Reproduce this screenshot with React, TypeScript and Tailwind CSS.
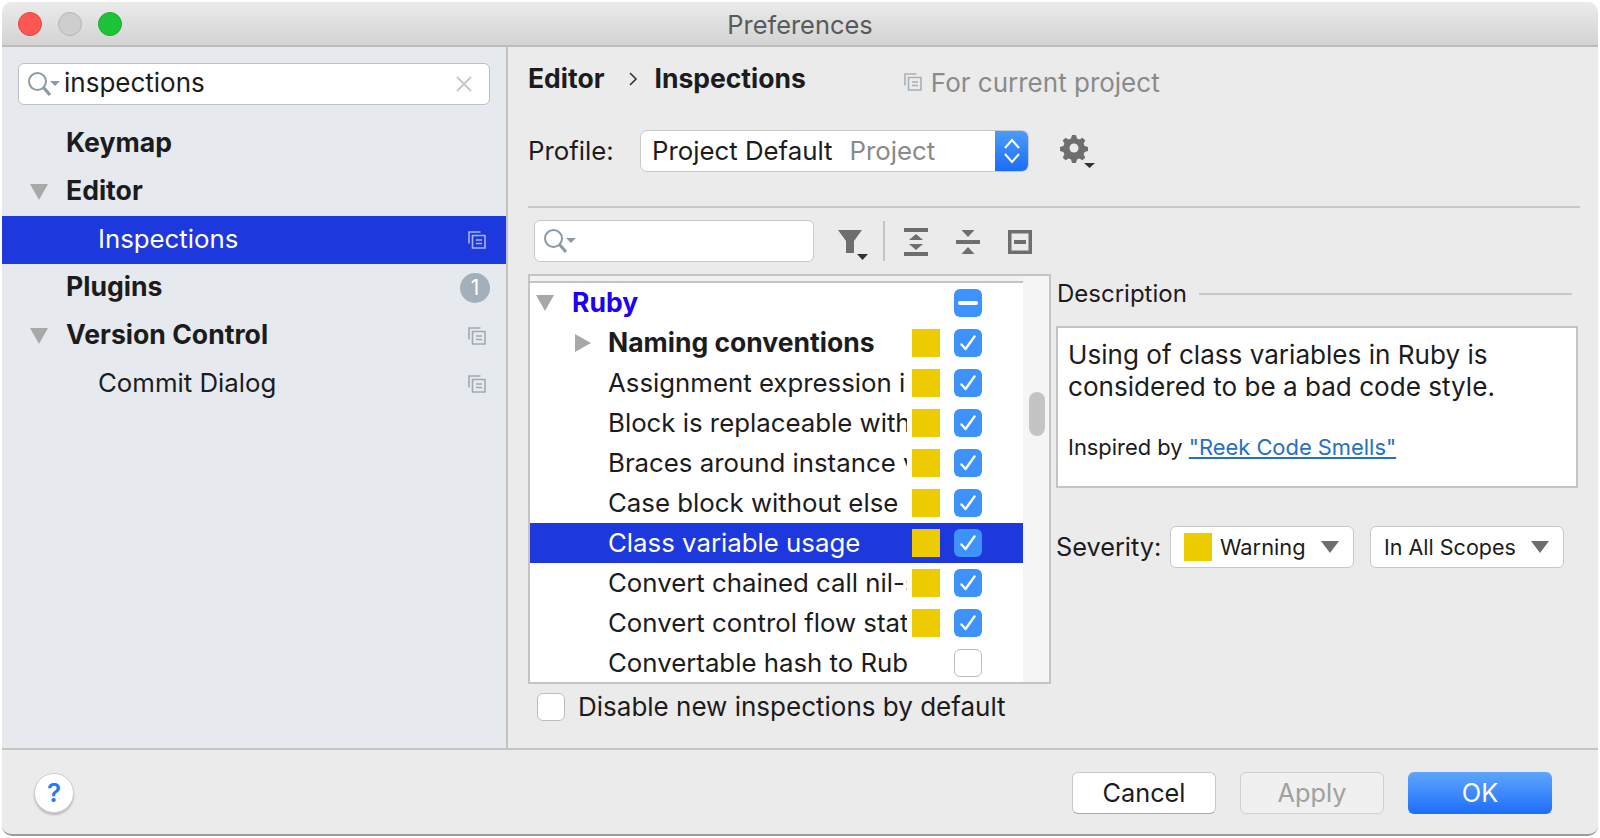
import type { ReactNode } from "react";

function SearchIcon() {
  return (
    <svg width="32" height="24" viewBox="0 0 32 24" fill="none" className="shrink-0">
      <circle cx="9.5" cy="9.5" r="8.5" stroke="#8c9aa5" strokeWidth="2" />
      <path d="M15.500 15.500l6.500 7.500" stroke="#8c9aa5" strokeWidth="3" />
      <path d="M22 9h10l-5 5z" fill="#8c9aa5" />
    </svg>
  );
}

function CopyIcon({ color = "#a0a9b2", size = 18 }: { color?: string; size?: number }) {
  return (
    <svg width={size} height={size} viewBox="0 0 18 18" fill="none" stroke={color} strokeWidth="1.6" className="shrink-0">
      <path d="M1 12.5V1h11.5" />
      <path d="M4.5 4.5H17V17H4.5z" />
      <path d="M8 9h6M8 12.5h6" />
    </svg>
  );
}

function TreeArrow({ open }: { open: boolean }) {
  return open ? (
    <svg width="18" height="16" viewBox="0 0 18 16" className="shrink-0">
      <path d="M0 0h18L9 16z" fill="#a8a8a8" />
    </svg>
  ) : (
    <svg width="16" height="18" viewBox="0 0 16 18" className="shrink-0">
      <path d="M0 0l16 9L0 18z" fill="#a8a8a8" />
    </svg>
  );
}

function Checkbox({ state }: { state: "on" | "off" | "mixed" }) {
  if (state === "off") {
    return <span className="block h-[28px] w-[28px] shrink-0 rounded-[6px] border border-[#bdbdbd] bg-white" />;
  }
  return (
    <span className="flex h-[28px] w-[28px] shrink-0 items-center justify-center rounded-[6px] bg-[#3d92fb]">
      {state === "on" ? (
        <svg width="18" height="18" viewBox="0 0 18 18" fill="none">
          <path d="M2.5 10.5l4 4.5L15.5 2.5" stroke="white" strokeWidth="2.4" strokeLinecap="round" strokeLinejoin="round" />
        </svg>
      ) : (
        <span className="h-[4px] w-[20px] rounded-full bg-white" />
      )}
    </span>
  );
}

function SidebarRow({
  label,
  bold,
  indent,
  arrow,
  selected,
  right,
}: {
  label: string;
  bold?: boolean;
  indent: string;
  arrow?: boolean;
  selected?: boolean;
  right?: ReactNode;
}) {
  return (
    <div className={`flex h-[48px] items-center pr-[20px] ${selected ? "bg-[#1d39dd] text-white" : "text-[#1c1c1c]"}`}>
      <div className={`flex ${indent} shrink-0 items-center pl-[28px]`}>{arrow && <TreeArrow open />}</div>
      <span className={`flex-1 pb-[2px] ${bold ? "text-[26.6px] font-bold" : "text-[25.8px]"}`}>{label}</span>
      {right}
    </div>
  );
}

const inspections: { label: string; bold?: boolean; checked: boolean; severity: boolean; selected?: boolean }[] = [
  { label: "Naming conventions", bold: true, checked: true, severity: true },
  { label: "Assignment expression in conditional", checked: true, severity: true },
  { label: "Block is replaceable with a symbol", checked: true, severity: true },
  { label: "Braces around instance variables", checked: true, severity: true },
  { label: "Case block without else branch", checked: true, severity: true },
  { label: "Class variable usage", checked: true, severity: true, selected: true },
  { label: "Convert chained call nil-safe", checked: true, severity: true },
  { label: "Convert control flow statement", checked: true, severity: true },
  { label: "Convertable hash to Ruby 1.9", checked: false, severity: false },
];

function Dropdown({ className, children }: { className: string; children: ReactNode }) {
  return (
    <div className={`flex h-[42px] items-center rounded-[6px] border border-[#c8c8c8] bg-white ${className}`}>
      {children}
      <svg width="18" height="12" viewBox="0 0 18 12" className="ml-auto shrink-0">
        <path d="M0 0h18L9 12z" fill="#6e6e6e" />
      </svg>
    </div>
  );
}

export default function App() {
  return (
    <div className="h-[838px] w-[1600px] overflow-hidden bg-white [font-family:Inter,sans-serif]">
      <div className="mx-[2px] mt-[2px] flex h-[834px] flex-col overflow-hidden rounded-[10px] border-b-2 border-[#9c9c9c] bg-[#ebebeb]">
        <header className="grid h-[45px] shrink-0 grid-cols-[1fr_auto_1fr] items-center border-b-2 border-[#bcbcbc] bg-gradient-to-b from-[#ebebeb] to-[#d3d3d3]">
          <div className="flex items-center gap-[16px] pl-[16px]">
            <span className="h-[24px] w-[24px] rounded-full border border-[#e2463f] bg-[#fc5753]" />
            <span className="h-[24px] w-[24px] rounded-full border border-[#b5b5b5] bg-[#cecece]" />
            <span className="h-[24px] w-[24px] rounded-full border border-[#1aab29] bg-[#1fc33a]" />
          </div>
          <span className="pt-[4px] text-[25.4px] text-[#5a5a5a]">Preferences</span>
          <div />
        </header>

        <div className="flex min-h-0 flex-1">
          <aside className="w-[506px] shrink-0 border-r-2 border-[#c4c4c4] bg-[#e6eaee]">
            <div className="mx-[16px] mb-[15px] mt-[16px] flex h-[42px] items-center rounded-[6px] border border-[#bcc0c4] bg-white pl-[9px] pr-[15px]">
              <SearchIcon />
              <span className="ml-[4px] flex-1 pb-[3px] text-[26px] text-[#1c1c1c]">inspections</span>
              <svg width="16" height="16" viewBox="0 0 16 16" fill="none" stroke="#c4c8cc" strokeWidth="1.8" className="mr-[2px]">
                <path d="M1 1l14 14M15 1L1 15" />
              </svg>
            </div>
            <SidebarRow label="Keymap" bold indent="w-[64px]" />
            <SidebarRow label="Editor" bold indent="w-[64px]" arrow />
            <SidebarRow label="Inspections" indent="w-[96px]" selected right={<CopyIcon color="#a9b4ee" />} />
            <SidebarRow
              label="Plugins"
              bold
              indent="w-[64px]"
              right={
                <span className="-mr-[4px] flex h-[30px] w-[30px] items-center justify-center rounded-full bg-[#a3afba] text-[21px] text-white">
                  1
                </span>
              }
            />
            <SidebarRow label="Version Control" bold indent="w-[64px]" arrow right={<CopyIcon />} />
            <SidebarRow label="Commit Dialog" indent="w-[96px]" right={<CopyIcon />} />
          </aside>

          <main className="flex min-w-0 flex-1 flex-col pl-[20px] pr-[18px] text-[#1c1c1c]">
            <div className="mt-[14px] flex h-[36px] items-center">
              <span className="text-[26.5px] font-bold">Editor</span>
              <svg width="10" height="14" viewBox="0 0 10 14" fill="none" stroke="#333" strokeWidth="1.6" className="ml-[24px]">
                <path d="M2 1l6 6-6 6" />
              </svg>
              <span className="ml-[16px] text-[26.5px] font-bold">Inspections</span>
              <div className="ml-[98px] mt-[6px] flex items-center gap-[9px] text-[26px] text-[#8a8a8a]">
                <CopyIcon color="#a7b1ba" />
                For current project
              </div>
            </div>

            <div className="mt-[33px] flex h-[42px] items-center">
              <span className="w-[112px] text-[25.8px]">Profile:</span>
              <div className="flex h-[42px] w-[389px] overflow-hidden rounded-[7px] border border-[#c8c8c8] bg-white">
                <div className="flex flex-1 items-center pl-[11px] text-[25.8px]">
                  <span>Project Default</span>
                  <span className="ml-[17px] text-[#8a8a8a]">Project</span>
                </div>
                <div className="flex w-[33px] items-center justify-center bg-gradient-to-b from-[#4b9bfb] to-[#1b6cf7]">
                  <svg width="18" height="26" viewBox="0 0 18 26" fill="none" stroke="white" strokeWidth="2">
                    <path d="M2 10l7-8 7 8M2 16l7 8 7-8" />
                  </svg>
                </div>
              </div>
              <svg width="36" height="36" viewBox="0 0 36 36" className="ml-[31px]">
                <path
                  d="M12 2h4l1 3.4 2.4 1 3.1-1.700 2.800 2.800-1.700 3.100 1 2.400 3.400 1v4l-3.400 1-1 2.400 1.700 3.100-2.800 2.800-3.100-1.700-2.400 1-1 3.400h-4l-1-3.400-2.400-1-3.100 1.700-2.800-2.800 1.700-3.100-1-2.400-3.400-1v-4l3.400-1 1-2.400-1.700-3.100 2.800-2.800 3.100 1.700 2.400-1z"
                  fill="#6e6e6e"
                  fillRule="evenodd"
                />
                <circle cx="14" cy="15" r="4.500" fill="#ebebeb" />
                <path d="M24 30h11l-5.500 5z" fill="#333" />
              </svg>
            </div>

            <div className="mt-[34px] h-[2px] bg-[#c8c8c8]" />

            <div className="ml-[6px] mt-[12px] flex h-[42px] items-center">
              <div className="flex h-[42px] w-[280px] items-center rounded-[6px] border border-[#c8c8c8] bg-white pl-[9px]">
                <SearchIcon />
              </div>
              <svg width="30" height="30" viewBox="0 0 30 30" className="ml-[24px] mt-[8px]">
                <path d="M0 0h24l-8 11v12H8V11z" fill="#6e6e6e" />
                <path d="M19 24h11l-5.500 6z" fill="#333" />
              </svg>
              <div className="ml-[15px] h-[40px] w-[2px] bg-[#c4c4c4]" />
              <svg width="24" height="28" viewBox="0 0 24 28" className="ml-[19px] mt-[2px]">
                <path d="M0 0h24v4H0zM0 24h24v4H0zM12 6l7 6H5zM5 16h14l-7 6z" fill="#6e6e6e" />
              </svg>
              <svg width="24" height="24" viewBox="0 0 24 24" className="ml-[28px] mt-[2px]">
                <path d="M0 10h24v4H0zM5.500 0h13L12 7zM5.500 24h13L12 17z" fill="#6e6e6e" />
              </svg>
              <svg width="24" height="24" viewBox="0 0 24 24" className="ml-[28px] mt-[2px]">
                <path d="M0 0h24v24H0zM3.500 3.500v17h17v-17zM6 10h12v4H6z" fill="#6e6e6e" fillRule="evenodd" />
              </svg>
            </div>

            <div className="mt-[12px] flex min-h-0">
              <div className="w-[523px] shrink-0">
                <div className="flex h-[410px] overflow-hidden border-2 border-[#c4c4c4] bg-[#f5f5f5]">
                  <div className="flex w-[493px] shrink-0 flex-col bg-white">
                    <div className="h-[7px] shrink-0 border-b-2 border-[#c4c4c4] bg-[#f2f2f2]" />
                    <div className="flex h-[40px] shrink-0 items-center pr-[41px]">
                      <div className="flex w-[42px] shrink-0 pl-[6px]">
                        <TreeArrow open />
                      </div>
                      <span className="flex-1 text-[26.5px] font-bold text-[#2000f0]">Ruby</span>
                      <Checkbox state="mixed" />
                    </div>
                    {inspections.map((item, i) => (
                      <div
                        key={item.label}
                        className={`flex h-[40px] shrink-0 items-center pr-[13px] ${item.selected ? "bg-[#1d39dd] text-white" : ""}`}
                      >
                        <div className="flex w-[78px] shrink-0 pl-[45px]">{i === 0 && <TreeArrow open={false} />}</div>
                        <span
                          className={`w-[299px] shrink-0 overflow-hidden whitespace-nowrap ${item.bold ? "text-[26.5px] font-bold" : "text-[25.8px]"}`}
                        >
                          {item.label}
                        </span>
                        <span className={`ml-[5px] h-[28px] w-[28px] shrink-0 ${item.severity ? "bg-[#eccb00]" : ""}`} />
                        <div className="ml-[14px]">
                          <Checkbox state={item.checked ? "on" : "off"} />
                        </div>
                      </div>
                    ))}
                  </div>
                  <div className="flex flex-1 justify-center pl-[2px] pt-[116px]">
                    <span className="h-[44px] w-[16px] rounded-[8px] bg-[#c4c4c4]" />
                  </div>
                </div>
                <div className="ml-[9px] mt-[3px] flex items-center gap-[13px]">
                  <Checkbox state="off" />
                  <span className="text-[26px]">Disable new inspections by default</span>
                </div>
              </div>

              <div className="ml-[5px] min-w-0 flex-1">
                <div className="mt-[2px] flex h-[36px] items-center pl-[1px]">
                  <span className="text-[24px]">Description</span>
                  <div className="ml-[12px] mr-[8px] h-[2px] flex-1 bg-[#c8c8c8]" />
                </div>
                <div className="mr-[2px] mt-[14px] h-[162px] border-2 border-[#c4c4c4] bg-white pl-[10px] pt-[11px]">
                  <p className="text-[26.1px] leading-[32px]">Using of class variables in Ruby is</p>
                  <p className="text-[26.1px] leading-[32px]">considered to be a bad code style.</p>
                  <p className="mt-[28px] text-[21.9px] leading-[32px]">
                    Inspired by <span className="text-[#2470c2] underline">"Reek Code Smells"</span>
                  </p>
                </div>
                <div className="mt-[38px] flex items-center">
                  <span className="w-[114px] shrink-0 text-[25.3px]">Severity:</span>
                  <Dropdown className="w-[184px] pl-[13px] pr-[14px]">
                    <span className="h-[28px] w-[28px] shrink-0 bg-[#eccb00]" />
                    <span className="ml-[8px] text-[21.8px]">Warning</span>
                  </Dropdown>
                  <Dropdown className="ml-[16px] w-[194px] pl-[13px] pr-[14px]">
                    <span className="whitespace-nowrap text-[21.5px]">In All Scopes</span>
                  </Dropdown>
                </div>
              </div>
            </div>
          </main>
        </div>

        <footer className="flex h-[86px] shrink-0 items-center border-t-2 border-[#c4c4c4] pl-[32px] pr-[46px] pt-[1px]">
          <span className="flex h-[40px] w-[40px] items-center justify-center rounded-full border border-[#d0d0d0] bg-white text-[26px] font-semibold text-[#1f7bf6] shadow-[0_2px_2px_rgba(0,0,0,0.2)]">
            ?
          </span>
          <div className="ml-auto flex gap-[24px] text-[25.3px]">
            <button
              type="button"
              className="h-[42px] w-[144px] rounded-[6px] border border-[#c8c8c8] border-b-[#aaaaaa] bg-white text-[#1c1c1c]"
            >
              Cancel
            </button>
            <button
              type="button"
              className="h-[42px] w-[144px] rounded-[6px] border border-[#d0d0d0] bg-[#f0f0f0] text-[#a0a0a0]"
            >
              Apply
            </button>
            <button
              type="button"
              className="h-[42px] w-[144px] rounded-[6px] bg-gradient-to-b from-[#5fa5fc] to-[#1b6cf9] text-white"
            >
              OK
            </button>
          </div>
        </footer>
      </div>
    </div>
  );
}
